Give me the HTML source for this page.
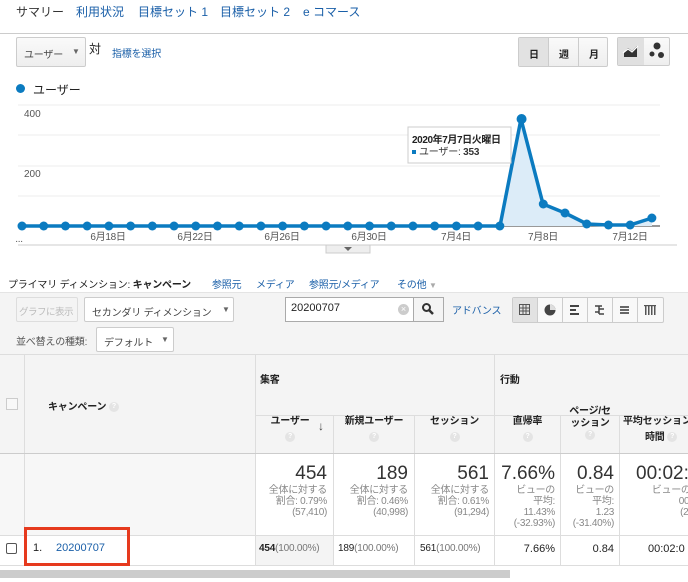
<!DOCTYPE html>
<html><head><meta charset="utf-8">
<style>
*{box-sizing:border-box;margin:0;padding:0}
body{width:688px;height:582px;overflow:hidden;background:#fff;font-family:"Liberation Sans","Noto Sans CJK JP",sans-serif;font-size:11px;color:#222;position:relative}
.a{position:absolute;white-space:nowrap}
.lnk{color:#1a5fa8}
.btn{position:absolute;border:1px solid #ccc;border-radius:2px;background:linear-gradient(#fafafa,#eee);}
.q{display:inline-block;width:10px;height:10px;border-radius:50%;background:#e4e4e4;color:#fff;font-size:7px;text-align:center;line-height:10px;vertical-align:middle}
.bd{position:absolute;background:#ddd}
.num{position:absolute;text-align:right;color:#888;font-size:10px;line-height:11px;letter-spacing:-0.3px;white-space:nowrap}
.big{font-size:19px;color:#333;line-height:22px;letter-spacing:0}
.s{font-size:10px;letter-spacing:-0.2px}
</style></head><body>
<div class="a" style="left:16px;top:3px;font-size:12px;color:#333">サマリー</div>
<div class="a lnk" style="left:76px;top:3px;font-size:12px">利用状況</div>
<div class="a lnk" style="left:138px;top:3px;font-size:12px">目標セット 1</div>
<div class="a lnk" style="left:220px;top:3px;font-size:12px">目標セット 2</div>
<div class="a lnk" style="left:303px;top:3px;font-size:12px">e コマース</div>
<div class="a" style="left:0;top:33px;width:688px;height:1px;background:#ccc"></div>

<div class="btn" style="left:16px;top:37px;width:70px;height:30px"><span class="a s" style="left:7px;top:8px;color:#444">ユーザー</span><span class="a" style="left:55px;top:9px;font-size:8px;color:#666">▼</span></div>
<div class="a" style="left:89px;top:40px;font-size:12px">対</div>
<div class="a lnk s" style="left:112px;top:45px">指標を選択</div>

<div class="btn" style="left:518px;top:37px;width:90px;height:30px;padding:0"></div>
<div class="a" style="left:519px;top:38px;width:29px;height:28px;background:#e2e2e2"></div>
<div class="a" style="left:548px;top:38px;width:1px;height:28px;background:#ccc"></div>
<div class="a" style="left:578px;top:38px;width:1px;height:28px;background:#ccc"></div>
<div class="a s" style="left:529px;top:46px;font-weight:bold">日</div>
<div class="a s" style="left:559px;top:46px;font-weight:bold">週</div>
<div class="a s" style="left:589px;top:46px;font-weight:bold">月</div>
<div class="btn" style="left:617px;top:37px;width:53px;height:29px"></div>
<div class="a" style="left:618px;top:38px;width:26px;height:27px;background:#e0e0e0"></div>
<svg class="a" style="left:622px;top:42px" width="18" height="18"><path d="M2 15 L2 10 L6 6 L10 9 L15 4 L15 15Z" fill="#333"/><path d="M1 11 L6 7 L10 10 L16 4" stroke="#fff" stroke-width="1.2" fill="none"/></svg>
<svg class="a" style="left:646px;top:41px" width="22" height="20"><circle cx="11" cy="5" r="3.5" fill="#333"/><circle cx="6" cy="13" r="2.5" fill="#333"/><circle cx="15" cy="14" r="3" fill="#333"/></svg>

<div class="a" style="left:16px;top:84px;width:9px;height:9px;border-radius:50%;background:#0b7bc0"></div>
<div class="a" style="left:33px;top:81px;font-size:12px">ユーザー</div>

<svg class="a" style="left:0;top:100px" width="688" height="160">
<g stroke="#eee" stroke-width="1"><line x1="18" x2="660" y1="5" y2="5"/><line x1="18" x2="660" y1="35" y2="35"/><line x1="18" x2="660" y1="66" y2="66"/><line x1="18" x2="660" y1="96" y2="96"/></g>
<line x1="18" x2="660" y1="126" y2="126" stroke="#333"/>
<text x="24" y="17" font-size="10" fill="#555" font-family="Liberation Sans">400</text>
<text x="24" y="77" font-size="10" fill="#555" font-family="Liberation Sans">200</text>
<polygon points="500,126 521,19 543,104 565,113 587,124 608,125 630,125 652,118 652,126" fill="#dcecf8"/>
<polyline fill="none" stroke="#0b7bc0" stroke-width="3.5" stroke-linejoin="round" points="22,126 500,126 521,19 543,104 565,113 587,124 608,125 630,125 652,118"/>
<g fill="#0b7bc0" id="dots"></g>
<g font-size="10" fill="#555" font-family="Liberation Sans,Noto Sans CJK JP" text-anchor="middle" letter-spacing="-0.3">
<text x="19" y="142">...</text><text x="108" y="140">6月18日</text><text x="195" y="140">6月22日</text><text x="282" y="140">6月26日</text><text x="369" y="140">6月30日</text><text x="456" y="140">7月4日</text><text x="543" y="140">7月8日</text><text x="630" y="140">7月12日</text></g>
<line x1="18" x2="677" y1="145" y2="145" stroke="#ccc"/>
<rect x="326" y="145" width="44" height="8" fill="#eee" stroke="#ccc"/>
<path d="M344 147 L352 147 L348 151Z" fill="#666"/>
<rect x="408" y="27" width="103" height="36" fill="#fff" stroke="#ccc"/>
<text x="412" y="43" font-size="10" font-weight="bold" fill="#222" letter-spacing="-0.4" font-family="Liberation Sans,Noto Sans CJK JP">2020年7月7日火曜日</text>
<rect x="412" y="50" width="4" height="4" fill="#0b7bc0"/>
<text x="419" y="55" font-size="10" fill="#333" letter-spacing="-0.2" font-family="Liberation Sans,Noto Sans CJK JP">ユーザー: <tspan font-weight="bold">353</tspan></text>
</svg>
<script>
var g=document.getElementById('dots'),ys={23:19,24:104,25:113,26:124,27:125,28:125,29:118};
for(var i=0;i<30;i++){var c=document.createElementNS('http://www.w3.org/2000/svg','circle');c.setAttribute('cx',22+i*21.72);c.setAttribute('cy',ys[i]||126);c.setAttribute('r',i==23?5:4.5);g.appendChild(c);}
</script>

<div class="a s" style="left:8px;top:276px">プライマリ ディメンション: <b>キャンペーン</b></div>
<div class="a lnk s" style="left:212px;top:276px">参照元</div>
<div class="a lnk s" style="left:256px;top:276px">メディア</div>
<div class="a lnk s" style="left:309px;top:276px">参照元/メディア</div>
<div class="a lnk s" style="left:397px;top:276px">その他 <span style="color:#aaa;font-size:8px">▼</span></div>
<div class="a" style="left:0;top:292px;width:688px;height:62px;background:#f4f4f4;border-top:1px solid #e4e4e4"></div>
<div class="btn" style="left:16px;top:297px;width:62px;height:25px;background:#f4f4f4;border-color:#ddd;overflow:hidden"><span class="a" style="left:2px;top:6px;color:#bbb;font-size:9.5px;letter-spacing:-0.5px">グラフに表示</span></div>
<div class="btn" style="left:84px;top:297px;width:150px;height:25px;background:#fff"><span class="a s" style="left:7px;top:6px;color:#444">セカンダリ ディメンション</span><span class="a" style="left:137px;top:7px;font-size:8px;color:#666">▼</span></div>
<div class="a" style="left:285px;top:297px;width:159px;height:25px;border:1px solid #aaa;background:#fff"></div>
<div class="a" style="left:291px;top:302px;font-size:11px">20200707</div>
<div class="a" style="left:398px;top:304px;width:11px;height:11px;border-radius:50%;background:#ccc;color:#fff;font-size:9px;line-height:11px;text-align:center">×</div>
<div class="a" style="left:413px;top:297px;width:31px;height:25px;border:1px solid #aaa;background:#f4f4f4"></div>
<svg class="a" style="left:421px;top:302px" width="14" height="14"><circle cx="5.5" cy="5.5" r="3.5" stroke="#333" stroke-width="2" fill="none"/><path d="M8 8 L12 12" stroke="#333" stroke-width="2.5"/></svg>
<div class="a lnk s" style="left:452px;top:302px">アドバンス</div>
<div class="btn" style="left:512px;top:297px;width:152px;height:26px;background:#f8f8f8"></div>
<div class="a" style="left:513px;top:298px;width:24px;height:24px;background:#e2e2e2"></div>
<svg class="a" style="left:512px;top:297px" width="152" height="26">
<g stroke="#ccc"><line x1="25.5" x2="25.5" y1="1" y2="25"/><line x1="50.5" x2="50.5" y1="1" y2="25"/><line x1="75.5" x2="75.5" y1="1" y2="25"/><line x1="100.5" x2="100.5" y1="1" y2="25"/><line x1="125.5" x2="125.5" y1="1" y2="25"/></g>
<g fill="none" stroke="#555"><rect x="7.5" y="7.5" width="10" height="10"/><path d="M7.5 11h10M7.5 14h10M11 7.5v10M14 7.5v10"/></g>
<circle cx="38" cy="13" r="5.5" fill="#444"/><path d="M38 13 V7.5 A5.5 5.5 0 0 1 43.5 13Z" fill="#ddd"/>
<g fill="#444"><rect x="58" y="8" width="9" height="2"/><rect x="58" y="12" width="6" height="2"/><rect x="58" y="16" width="9" height="2"/></g>
<path d="M83 9h7M87 9v8M87 12h5M83 15h4M87 17h5" stroke="#444" stroke-width="1.5" fill="none"/>
<g fill="#666"><rect x="108" y="9" width="9" height="2"/><rect x="108" y="12" width="9" height="2"/><rect x="108" y="15" width="9" height="2"/></g>
<g fill="#555"><rect x="133" y="8" width="1.5" height="10"/><rect x="136" y="8" width="1.5" height="10"/><rect x="139" y="8" width="1.5" height="10"/><rect x="142" y="8" width="1.5" height="10"/><rect x="132" y="8" width="12" height="1.2"/></g>
</svg>
<div class="a s" style="left:16px;top:333px;color:#555">並べ替えの種類:</div>
<div class="btn" style="left:96px;top:327px;width:78px;height:25px;background:#fff"><span class="a s" style="left:7px;top:6px;color:#444">デフォルト</span><span class="a" style="left:64px;top:7px;font-size:8px;color:#666">▼</span></div>

<!-- table -->
<div class="a" style="left:0;top:354px;width:688px;height:100px;background:#f4f4f4;border-top:1px solid #ddd"></div>
<div class="a" style="left:0;top:454px;width:255px;height:81px;background:#f7f7f7"></div>
<div class="a" style="left:255px;top:535px;width:78px;height:31px;background:#f4f4f4"></div>
<div class="bd" style="left:24px;top:354px;width:1px;height:212px"></div>
<div class="bd" style="left:255px;top:354px;width:1px;height:212px"></div>
<div class="bd" style="left:494px;top:354px;width:1px;height:212px"></div>
<div class="bd" style="left:333px;top:415px;width:1px;height:151px"></div>
<div class="bd" style="left:414px;top:415px;width:1px;height:151px"></div>
<div class="bd" style="left:560px;top:415px;width:1px;height:151px"></div>
<div class="bd" style="left:619px;top:415px;width:1px;height:151px"></div>
<div class="bd" style="left:255px;top:415px;width:433px;height:1px"></div>
<div class="bd" style="left:0;top:453px;width:688px;height:1px;background:#ccc"></div>
<div class="bd" style="left:0;top:535px;width:688px;height:1px"></div>
<div class="bd" style="left:0;top:565px;width:688px;height:1px"></div>
<div class="a" style="left:6px;top:398px;width:12px;height:12px;border:1px solid #ccc;background:#f8f8f8"></div>
<div class="a s" style="left:48px;top:398px;font-weight:bold">キャンペーン <span class="q">?</span></div>
<div class="a s" style="left:260px;top:371px;font-weight:bold">集客</div>
<div class="a s" style="left:500px;top:371px;font-weight:bold">行動</div>
<div class="a s" style="left:256px;top:414px;width:68px;text-align:center;font-weight:bold;line-height:16px">ユーザー<br><span class="q">?</span></div>
<div class="a" style="left:318px;top:419px;font-size:12px;color:#444">↓</div>
<div class="a s" style="left:334px;top:414px;width:80px;text-align:center;font-weight:bold;line-height:16px">新規ユーザー<br><span class="q">?</span></div>
<div class="a s" style="left:415px;top:414px;width:79px;text-align:center;font-weight:bold;line-height:16px">セッション<br><span class="q">?</span></div>
<div class="a s" style="left:495px;top:414px;width:65px;text-align:center;font-weight:bold;line-height:16px">直帰率<br><span class="q">?</span></div>
<div class="a s" style="left:561px;top:406px;width:58px;text-align:center;font-weight:bold;line-height:12px">ページ/セ<br>ッション<br><span class="q">?</span></div>
<div class="a s" style="left:623px;top:414px;font-weight:bold;line-height:16px">平均セッション<br><span style="padding-left:22px">時間 <span class="q">?</span></span></div>

<div class="num" style="left:256px;top:463px;width:71px"><div class="big">454</div>全体に対する<br>割合: 0.79%<br>(57,410)</div>
<div class="num" style="left:334px;top:463px;width:74px"><div class="big">189</div>全体に対する<br>割合: 0.46%<br>(40,998)</div>
<div class="num" style="left:415px;top:463px;width:74px"><div class="big">561</div>全体に対する<br>割合: 0.61%<br>(91,294)</div>
<div class="num" style="left:495px;top:463px;width:60px"><div class="big">7.66%</div>ビューの<br>平均:<br>11.43%<br>(-32.93%)</div>
<div class="num" style="left:561px;top:463px;width:53px"><div class="big">0.84</div>ビューの<br>平均:<br>1.23<br>(-31.40%)</div>
<div class="num" style="left:620px;top:463px;width:90px;text-align:right"><div class="big">00:02:00</div>ビューの平均<br>00:01:5<br>(2.54%</div>

<div class="a" style="left:6px;top:543px;width:11px;height:11px;border:1px solid #555;border-radius:2px;background:#fff"></div>
<div class="a" style="left:33px;top:542px">1.</div>
<div class="a lnk" style="left:56px;top:542px">20200707</div>
<div class="a" style="left:24px;top:527px;width:106px;height:39px;border:3px solid #e63a1e"></div>
<div class="a" style="left:259px;top:543px;font-size:10px;letter-spacing:-0.2px"><b>454</b><span style="color:#777">(100.00%)</span></div>
<div class="a" style="left:338px;top:543px;font-size:10px;letter-spacing:-0.2px">189<span style="color:#777">(100.00%)</span></div>
<div class="a" style="left:420px;top:543px;font-size:10px;letter-spacing:-0.2px">561<span style="color:#777">(100.00%)</span></div>
<div class="a" style="left:495px;top:543px;width:60px;text-align:right;font-size:11px">7.66%</div>
<div class="a" style="left:561px;top:543px;width:53px;text-align:right;font-size:11px">0.84</div>
<div class="a" style="left:648px;top:543px;font-size:11px">00:02:0</div>
<div class="a" style="left:0;top:570px;width:510px;height:8px;background:#ccc"></div>
</body></html>
